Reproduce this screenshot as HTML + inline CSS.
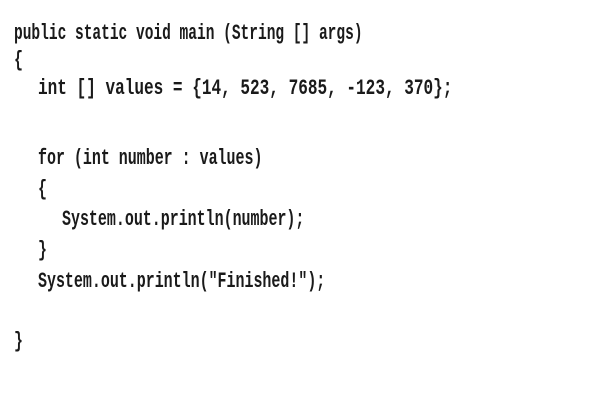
<!DOCTYPE html>
<html><head><style>
body{margin:0;width:601px;height:401px;background:#fff;overflow:hidden;position:relative}
.l{position:absolute;font-family:"Liberation Mono",monospace;font-weight:bold;font-size:22px;line-height:22px;white-space:pre;color:#1a1a1a;transform:scaleX(0.68);transform-origin:0 0}
</style></head><body>
<div class="l" style="left:14px;top:23px;transform:scaleX(0.66)">public static void main (String [] args)</div>
<div class="l" style="left:14px;top:50px">{</div>
<div class="l" style="left:38px;top:78px;transform:scaleX(0.73)">int [] values = {14, 523, 7685, -123, 370};</div>
<div class="l" style="left:38px;top:148px">for (int number : values)</div>
<div class="l" style="left:38px;top:179px">{</div>
<div class="l" style="left:62px;top:209px">System.out.println(number);</div>
<div class="l" style="left:38px;top:240px">}</div>
<div class="l" style="left:38px;top:271px">System.out.println("Finished!");</div>
<div class="l" style="left:14px;top:331px">}</div>
</body></html>
